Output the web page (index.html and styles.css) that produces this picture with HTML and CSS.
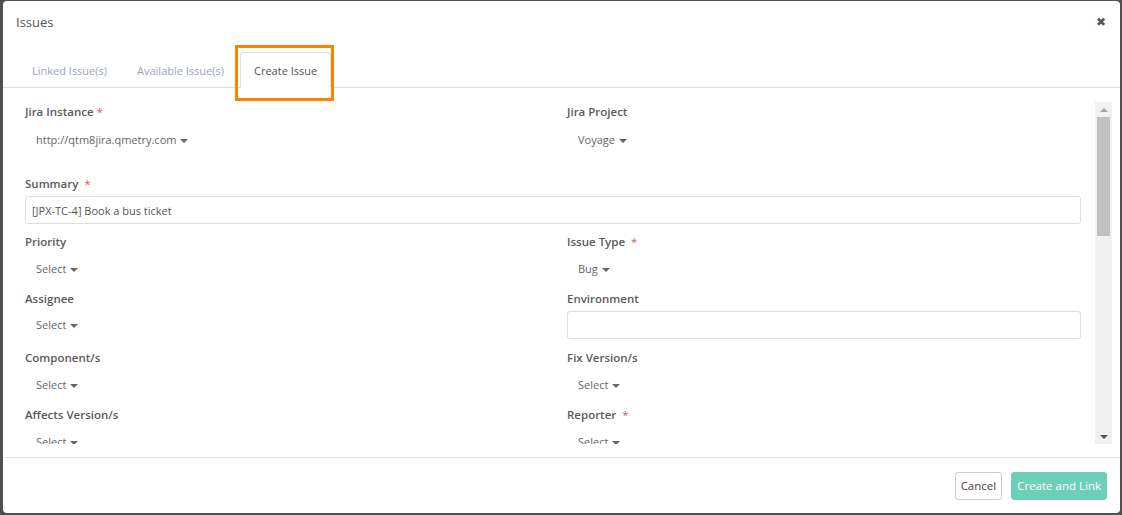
FILE: index.html
```html
<!DOCTYPE html>
<html lang="en">
<head>
  <meta charset="UTF-8">
  <title>Issues</title>
  <link rel="stylesheet" href="styles.css">
</head>
<body>
  <div class="modal">
    <!-- header -->
    <div class="modal-header">
      <span class="modal-title">Issues</span>
      <span class="close-btn">&#x2716;</span>
    </div>

    <!-- tabs -->
    <ul class="nav-tabs">
      <li class="tab">Linked Issue(s)</li>
      <li class="tab">Available Issue(s)</li>
      <li class="tab active">Create Issue</li>
    </ul>
    <div class="highlight"></div>

    <!-- body -->
    <div class="modal-body">
      <div class="form-scroll">
        <div class="form-grid">
          <div class="field field-lg">
            <label>Jira Instance <span class="req">*</span></label>
            <div class="dropdown">http://qtm8jira.qmetry.com <span class="caret"></span></div>
          </div>
          <div class="field field-lg">
            <label>Jira Project</label>
            <div class="dropdown">Voyage <span class="caret"></span></div>
          </div>

          <div class="field full">
            <label>Summary &nbsp;<span class="req">*</span></label>
            <input class="text-input" type="text" value="[JPX-TC-4] Book a bus ticket">
          </div>

          <div class="field">
            <label>Priority</label>
            <div class="dropdown">Select <span class="caret"></span></div>
          </div>
          <div class="field">
            <label>Issue Type &nbsp;<span class="req">*</span></label>
            <div class="dropdown">Bug <span class="caret"></span></div>
          </div>

          <div class="field field-sm">
            <label>Assignee</label>
            <div class="dropdown">Select <span class="caret"></span></div>
          </div>
          <div class="field field-sm">
            <label>Environment</label>
            <input class="text-input" type="text" value="">
          </div>

          <div class="field">
            <label>Component/s</label>
            <div class="dropdown">Select <span class="caret"></span></div>
          </div>
          <div class="field">
            <label>Fix Version/s</label>
            <div class="dropdown">Select <span class="caret"></span></div>
          </div>

          <div class="field field-up">
            <label>Affects Version/s</label>
            <div class="dropdown">Select <span class="caret"></span></div>
          </div>
          <div class="field field-up">
            <label>Reporter &nbsp;<span class="req">*</span></label>
            <div class="dropdown">Select <span class="caret"></span></div>
          </div>

          <div class="field">
            <label>Labels</label>
            <input class="text-input" type="text" value="">
          </div>
          <div class="field">
            <label>Due Date</label>
            <input class="text-input" type="text" value="">
          </div>

          <div class="field full">
            <label>Description</label>
            <textarea class="text-area"></textarea>
          </div>
        </div>
        <!-- scrollbar -->
        <div class="scrollbar">
          <div class="sb-btn"><span class="sb-up"></span></div>
          <div class="sb-track"><div class="sb-thumb"></div></div>
          <div class="sb-btn"><span class="sb-down"></span></div>
        </div>
      </div>
    </div>

    <!-- footer -->
    <div class="modal-footer">
      <button class="btn btn-default">Cancel</button>
      <button class="btn btn-primary">Create and Link</button>
    </div>
  </div>
</body>
</html>
```

FILE: styles.css
```css
* {
  box-sizing: border-box;
}
body {
  margin: 0;
  background: #505050;
  font-family: "Open Sans", "Noto Sans", sans-serif;
  font-size: 11px;
  color: #555;
}
.modal {
  position: relative;
  margin: 1px 2px 0 3px;
  height: 512px;
  background: #fff;
  border-radius: 4px;
  display: flex;
  flex-direction: column;
}
.modal-header {
  height: 43px;
  padding: 0 14px 2px 13px;
  display: flex;
  align-items: center;
  justify-content: space-between;
}
.modal-title {
  font-size: 13px;
  color: #555;
}
.close-btn {
  font-size: 12px;
  color: #555;
  font-family: "DejaVu Sans", sans-serif;
}
.nav-tabs {
  list-style: none;
  margin: 8px 0 0;
  padding: 0 0 0 15px;
  display: flex;
  border-bottom: 1px solid #ddd;
}
.tab {
  height: 36px;
  padding: 0 13px;
  margin-right: 2px;
  margin-bottom: -1px;
  display: flex;
  align-items: center;
  color: #9ba6b8;
  border: 1px solid transparent;
  border-radius: 4px 4px 0 0;
}
.tab.active {
  color: #555;
  background: #fff;
  border-color: #ddd #ddd #fff;
}
.highlight {
  position: absolute;
  left: 232px;
  top: 44px;
  width: 99px;
  height: 56px;
  border: 3px solid #ff8200;
}
.modal-body {
  flex: 1;
  padding: 14px 8px 13px 22px;
  border-bottom: 1px solid #e5e5e5;
}
.form-scroll {
  height: 342px;
  overflow: hidden;
  display: flex;
}
.form-grid {
  flex: 1;
  align-self: flex-start;
  display: grid;
  grid-template-columns: 1fr 1fr;
  column-gap: 28px;
  padding: 2px 14px 0 0;
}
.field {
  margin-bottom: 10px;
}
.field-lg {
  margin-bottom: 24px;
}
.field-sm {
  margin-bottom: 11px;
}
.field.full {
  grid-column: 1 / 3;
}
.field label {
  display: block;
  height: 16px;
  line-height: 16px;
  margin-bottom: 4px;
  font-size: 11.5px;
  font-weight: 600;
  color: #5a5a5a;
}
.field-sm label {
  margin-top: -1px;
}
.field-up label {
  margin-top: -1px;
}
.req {
  color: #e8505b;
  font-weight: 400;
}
.dropdown {
  height: 28px;
  line-height: 28px;
  padding: 1px 0 0 11px;
  color: #666;
}
.field-lg .dropdown {
  padding-top: 2px;
}
.field-sm .dropdown {
  padding-top: 0;
}
.caret {
  display: inline-block;
  width: 0;
  height: 0;
  margin-left: 1px;
  vertical-align: middle;
  border-top: 4px solid #666;
  border-left: 4px solid transparent;
  border-right: 4px solid transparent;
}
.text-input {
  display: block;
  width: 100%;
  height: 28px;
  padding: 0 6px;
  border: 1px solid #ddd;
  border-radius: 3px;
  font-family: inherit;
  font-size: 11px;
  color: #555;
  outline: none;
}
.text-area {
  display: block;
  width: 100%;
  height: 110px;
  border: 1px solid #ddd;
  border-radius: 3px;
  resize: none;
}
.scrollbar {
  width: 17px;
  flex-shrink: 0;
  background: #f1f1f1;
  display: flex;
  flex-direction: column;
}
.sb-btn {
  height: 15px;
  display: flex;
  align-items: center;
  justify-content: center;
}
.sb-up, .sb-down {
  width: 0;
  height: 0;
  border-left: 4px solid transparent;
  border-right: 4px solid transparent;
}
.sb-up {
  border-bottom: 4px solid #a3a3a3;
}
.sb-down {
  border-top: 4px solid #505050;
}
.sb-track {
  flex: 1;
  padding: 0 2px;
}
.sb-thumb {
  height: 119px;
  background: #c1c1c1;
}
.modal-footer {
  height: 55px;
  padding: 0 13px 0 0;
  display: flex;
  align-items: center;
  justify-content: flex-end;
  gap: 9px;
}
.btn {
  height: 28px;
  padding: 0 5px;
  border-radius: 3px;
  font-family: inherit;
  font-size: 11.5px;
  cursor: pointer;
}
.btn-default {
  background: #fff;
  color: #444;
  border: 1px solid #ccc;
}
.btn-primary {
  background: #6dcfb7;
  color: #fff;
  border: 1px solid #6dcfb7;
}
```
